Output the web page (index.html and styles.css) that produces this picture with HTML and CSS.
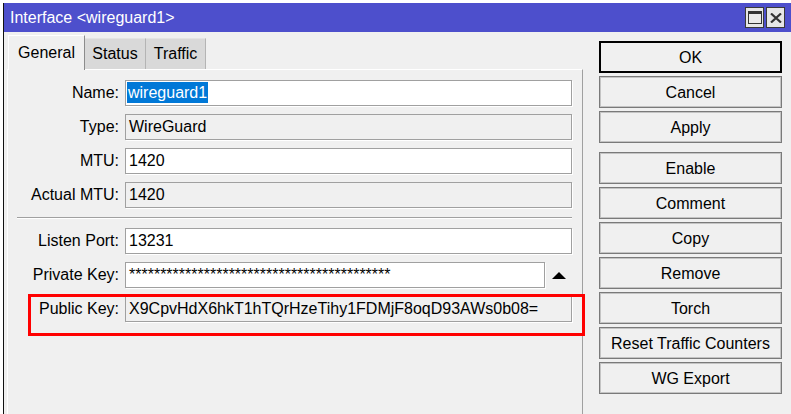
FILE: index.html
```html
<!DOCTYPE html>
<html lang="en">
<head>
  <meta charset="UTF-8" />
  <meta name="viewport" content="width=device-width, initial-scale=1.0"/>
  <title>Interface &lt;wireguard1&gt;</title>
  <link rel="stylesheet" href="styles.css">
</head>
<body>
  <div class="desk-strip"></div>

  <div class="window">
    <!-- Title bar -->
    <div class="titlebar">
      <span class="title">Interface &lt;wireguard1&gt;</span>
      <div class="title-btns">
        <span class="title-btn">
          <svg width="14" height="13" viewBox="0 0 14 13">
            <rect x="0.5" y="0.5" width="13" height="12" fill="#eaeaea" stroke="#333"/>
            <rect x="0" y="0" width="14" height="3" fill="#333"/>
          </svg>
        </span>
        <span class="title-btn">
          <svg width="12" height="10" viewBox="0 0 12 10">
            <path d="M1 0.5L11 9.5M11 0.5L1 9.5" stroke="#333" stroke-width="2.2"/>
          </svg>
        </span>
      </div>
    </div>

    <div class="window-body">
      <div class="main">
        <div class="tabs">
          <div class="tab active">General</div>
          <div class="tab">Status</div>
          <div class="tab">Traffic</div>
        </div>

        <div class="panel">
          <div class="row">
            <label>Name:</label>
            <div class="field editable"><span class="selected">wireguard1</span></div>
          </div>
          <div class="row">
            <label>Type:</label>
            <div class="field">WireGuard</div>
          </div>
          <div class="row">
            <label>MTU:</label>
            <div class="field editable">1420</div>
          </div>
          <div class="row">
            <label>Actual MTU:</label>
            <div class="field">1420</div>
          </div>

          <div class="separator"></div>

          <div class="row">
            <label>Listen Port:</label>
            <div class="field editable">13231</div>
          </div>
          <div class="row">
            <label>Private Key:</label>
            <div class="field editable">******************************************</div>
            <span class="arrow-cell"><span class="arrow-up"></span></span>
          </div>
          <div class="row marked">
            <label>Public Key:</label>
            <div class="field">X9CpvHdX6hkT1hTQrHzeTihy1FDMjF8oqD93AWs0b08=</div>
            <div class="callout"></div>
          </div>
        </div>
      </div>

      <div class="actions">
        <button class="btn default">OK</button>
        <button class="btn">Cancel</button>
        <button class="btn">Apply</button>
        <button class="btn group-start">Enable</button>
        <button class="btn">Comment</button>
        <button class="btn">Copy</button>
        <button class="btn">Remove</button>
        <button class="btn">Torch</button>
        <button class="btn">Reset Traffic Counters</button>
        <button class="btn">WG Export</button>
      </div>
    </div>
  </div>
</body>
</html>
```

FILE: styles.css
```css
* {
  margin: 0; padding: 0; box-sizing: border-box; font-family: 'Liberation Sans', Arial, sans-serif;
}

body {
  background: #fff;
  color: #000;
  height: 414px;
  overflow: hidden;
  font-size: 16px;
}

.desk-strip {
  height: 3px;
  background: #fff;
}

.window {
  margin-left: 3px;
  border-left: 1px solid #111;
  height: 411px;
  background: #f0f0f0;
  display: flex;
  flex-direction: column;
}

/* title bar */
.titlebar {
  height: 29px;
  background: #4d4fcc;
  display: flex;
  align-items: center;
  justify-content: space-between;
  padding: 0 6px;
}

.title {
  color: #fff;
  font-size: 16px;
  padding-top: 1px;
}

.title-btns {
  display: flex;
  gap: 2px;
}

.title-btn {
  width: 19px;
  height: 21px;
  background: #e6e6e6;
  border: 1px solid #3a3a3a;
  display: flex;
  align-items: center;
  justify-content: center;
}

/* body */
.window-body {
  flex: 1;
  display: flex;
  min-height: 0;
}

.main {
  width: 579px;
  padding: 2px 0 0 3px;
  display: flex;
  flex-direction: column;
}

.tabs {
  height: 35px;
  display: flex;
  align-items: flex-end;
  margin-left: 1px;
}

.tab {
  height: 31px;
  display: flex;
  align-items: center;
  justify-content: center;
  background: #d9d9d9;
  border-top: 1px solid #e4e4e4;
  border-right: 1px solid #b4b4b4;
  width: 61px;
}

.tab:last-child {
  width: 60px;
}

.tab.active {
  height: 35px;
  width: 77px;
  background: #f0f0f0;
  border-top: 1px solid #fff;
  border-left: 1px solid #fff;
  border-right: 1px solid #8c8c8c;
  margin-bottom: -1px;
  position: relative;
}

.panel {
  flex: 1;
  border-top: 1px solid #fff;
  border-left: 1px solid #fff;
  border-right: 1px solid #a0a0a0;
  padding: 10px 10px 0 0;
  display: flex;
  flex-direction: column;
  gap: 8px;
}

.row {
  height: 26px;
  display: flex;
  align-items: center;
}

.row label {
  width: 111px;
  margin-right: 6px;
  text-align: right;
  white-space: nowrap;
}

.field {
  flex: 1;
  height: 26px;
  border: 1px solid #a0a0a0;
  box-shadow: 1px 1px 0 #fff;
  background: #f0f0f0;
  line-height: 24px;
  padding-left: 3px;
  white-space: nowrap;
  overflow: hidden;
}

.field.editable {
  background: #fff;
}

.selected {
  display: inline-block;
  vertical-align: top;
  margin: 1px 0 0 -2px;
  padding: 0 1px;
  line-height: 21px;
  background: #0078d7;
  color: #fff;
}

.arrow-cell {
  width: 27px;
  display: flex;
  justify-content: center;
}

.arrow-up {
  width: 0;
  height: 0;
  border-left: 7px solid transparent;
  border-right: 7px solid transparent;
  border-bottom: 7px solid #000;
}

.separator {
  height: 2px;
  margin: 1px 0 1px 9px;
  border-top: 1px solid #a0a0a0;
  border-bottom: 1px solid #fff;
}

/* red annotation box */
.row.marked {
  position: relative;
}

.callout {
  position: absolute;
  left: 20px;
  top: -2px;
  width: 557px;
  height: 42px;
  border: 3px solid #ff0000;
}

/* right button column */
.actions {
  width: 183px;
  margin-left: 16px;
  padding-top: 9px;
  display: flex;
  flex-direction: column;
  gap: 3px;
}

.btn {
  height: 32px;
  padding-top: 1px;
  background: #f0f0f0;
  border: 1px solid #7a7a7a;
  box-shadow: inset 0 0 0 1px #c4c4c4;
  font-size: 16px;
  color: #000;
}

.btn.default {
  border: 2px solid #000;
  box-shadow: none;
}

.btn.group-start {
  margin-top: 6px;
}
```
